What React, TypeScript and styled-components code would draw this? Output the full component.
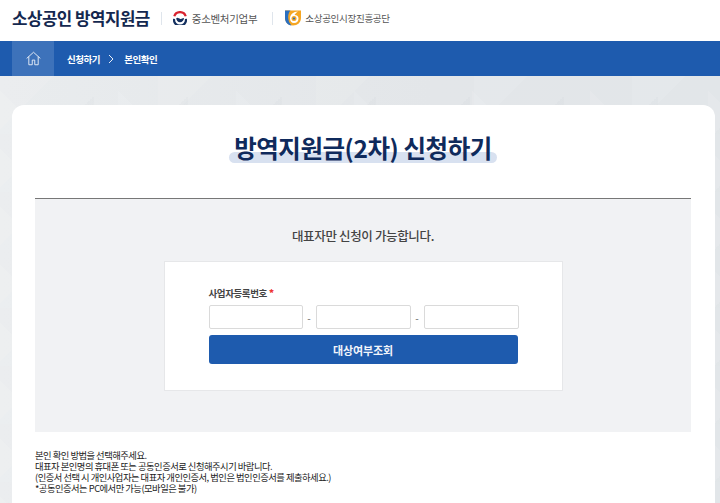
import React from "react";
import styled, { createGlobalStyle } from "styled-components";

const Global = createGlobalStyle`
  html, body { margin: 0; padding: 0; height: 503px; overflow: hidden; background: #e6e9ec; }
  * { box-sizing: border-box; }
  body { font-family: "Noto Sans CJK KR", "Noto Sans", sans-serif; }
`;
const Page = styled.div`width: 720px; height: 503px; overflow: hidden; display: flex; flex-direction: column;`;
const Header = styled.header`height: 41px; flex: none; background: #fff; display: flex; align-items: center; padding: 0 0 5px 12px;`;
const Brand = styled.h1`margin: 0; font-size: 16.8px; line-height: 24px; font-weight: 700; color: #14284f; letter-spacing: -0.5px; white-space: nowrap;`;
const Sep = styled.i<{ $m: string }>`width: 1px; height: 13px; background: #dfe5ec; margin: ${p => p.$m};`;
const Org = styled.span<{ $size: number }>`font-size: ${p => p.$size}px; color: #555; letter-spacing: -0.3px; white-space: nowrap; margin-left: ${p => (p.$size > 10 ? 5 : 3)}px;`;
const Nav = styled.nav`height: 35px; flex: none; background: #1e5bae; display: flex; align-items: center; padding-left: 12px; color: #fff;`;
const HomeBox = styled.div`width: 42px; height: 35px; background: #3d72ba; display: flex; align-items: center; justify-content: center;`;
const Crumb = styled.span`font-size: 9.5px; font-weight: 700; letter-spacing: -0.45px; white-space: nowrap; &:first-of-type { margin-left: 13px; }`;
const Chevron = styled.svg`margin: 0 10px 0 8px;`;
const Background = styled.main`
  flex: 1; padding: 29px 5px 0 12px;
  background-color: #e5e8eb;
  background-image:
    linear-gradient(45deg, rgba(255,255,255,.09) 25%, transparent 25%),
    linear-gradient(-45deg, rgba(120,130,140,.035) 25%, transparent 25%),
    linear-gradient(135deg, rgba(255,255,255,.07) 25%, transparent 25%),
    linear-gradient(90deg, #e9ecee 0%, #e3e6e9 60%, #e2e6e9 100%);
  background-size: 118px 58px, 94px 58px, 158px 58px, 100% 100%;
`;
const Card = styled.section`height: 427px; background: #fff; border-radius: 12px 12px 0 0; padding: 0 24px 0 23px; display: flex; flex-direction: column;`;
const TitleRow = styled.div`height: 93px; display: flex; justify-content: center; padding-top: 25px; flex: none;`;
const Title = styled.h2`
  position: relative; margin: 0; height: 36px; padding: 0 5px; font-size: 24.5px; line-height: 36px; font-weight: 700; color: #0f2a5c; letter-spacing: -0.45px; white-space: nowrap;
  &::before { content: ""; position: absolute; left: 0; right: 0; top: 22px; height: 11px; border-radius: 6px; background: #d8e1f0; }
  & > span { position: relative; }
`;
const Panel = styled.div`height: 234px; flex: none; background: #f1f2f4; border-top: 1px solid #777; display: flex; flex-direction: column; align-items: center; padding-top: 26px;`;
const Lead = styled.p`margin: 0; font-size: 12.5px; line-height: 22px; font-weight: 500; color: #444; letter-spacing: -0.35px;`;
const FormBox = styled.div`width: 399px; height: 130px; margin-top: 14px; background: #fff; border: 1px solid #e6e7e9; padding: 24px 0 0 44px;`;
const Label = styled.label`display: block; font-size: 9.5px; line-height: 14px; font-weight: 700; color: #444; letter-spacing: -0.4px; & b { color: #e33; margin-left: 2px; }`;
const Fields = styled.div`display: flex; align-items: center; margin-top: 5px;`;
const Field = styled.input`width: 94px; height: 24px; border: 1px solid #dadada; border-radius: 2px; background: #fff; &:not(:first-child) { width: 95px; }`;
const Dash = styled.span`width: 13px; text-align: center; font-size: 10px; color: #666;`;
const Submit = styled.button`display: block; width: 309px; height: 29px; margin-top: 6px; border: 0; border-radius: 3px; background: #1e5bae; color: #f1f4fa; font: 700 11px "Noto Sans CJK KR", sans-serif; letter-spacing: -0.1px;`;
const Notes = styled.div`margin-top: 18px; font-size: 9.3px; line-height: 11px; color: #222; letter-spacing: -0.5px; white-space: nowrap;`;

export default function App() {
  return (
    <Page>
      <Global />
      <Header>
        <Brand>소상공인 방역지원금</Brand>
        <Sep $m="0 11px 0 11px" />
        <svg width="14" height="14" viewBox="0 0 24 24" style={{ flex: "none" }}>
          <circle cx="12" cy="12" r="11.500" fill="#fff" />
          <path d="M1.800 13.500A10.300 10.300 0 1 0 22.200 13.500" fill="none" stroke="#14305f" strokeWidth="3.800" />
          <path d="M2.200 9A10.300 10.300 0 0 1 21.800 9" fill="none" stroke="#d8232f" strokeWidth="3.800" />
          <path d="M5.500 12.500C7.500 10 10 12.500 12.500 13.500S17 11 18.800 12.500c-.2 4-3 6.800-6.800 6.800s-6.300-3-6.500-6.800z" fill="#14305f" />
        </svg>
        <Org $size={10.5}>중소벤처기업부</Org>
        <Sep $m="0 11px 0 15px" />
        <svg width="18" height="16" viewBox="0 0 36 32" style={{ flex: "none" }}>
          <path d="M2 1h32v15c0 9-7 15-16 15S2 25 2 16z" fill="#f5a623" />
          <path d="M2 1h11C7 7 6 21 15 31 7 30 2 24 2 16z" fill="#2a6fc0" />
          <path d="M28 3c-9 0-16 6-16 14 0 5 3 9 8 9 6 0 9-4 9-9 0-4-3-7-8-7 2-3 4-5 7-7z" fill="#fff" />
          <circle cx="20" cy="17" r="5" fill="#f5a623" />
          <circle cx="20" cy="17" r="2.200" fill="#2a6fc0" />
        </svg>
        <Org $size={9.5}>소상공인시장진흥공단</Org>
      </Header>
      <Nav>
        <HomeBox>
          <svg width="15" height="15" viewBox="0 0 24 24" fill="none" stroke="#e8eef8" strokeWidth="1.500" strokeLinejoin="round" strokeLinecap="round">
            <path d="M1.500 11.500 12 2l10.500 9.500M4.500 9.500V22h5.500v-7.500h4V22h5.500V9.500" />
          </svg>
        </HomeBox>
        <Crumb>신청하기</Crumb>
        <Chevron width="6" height="10" viewBox="0 0 6 10" fill="none" stroke="#e8eef8" strokeWidth="1">
          <path d="m1 1 4 4-4 4" />
        </Chevron>
        <Crumb>본인확인</Crumb>
      </Nav>
      <Background>
        <Card>
          <TitleRow>
            <Title><span>방역지원금(2차) 신청하기</span></Title>
          </TitleRow>
          <Panel>
            <Lead>대표자만 신청이 가능합니다.</Lead>
            <FormBox>
              <Label>사업자등록번호<b>*</b></Label>
              <Fields>
                <Field aria-label="사업자등록번호 앞자리" />
                <Dash>-</Dash>
                <Field aria-label="사업자등록번호 가운데" />
                <Dash>-</Dash>
                <Field aria-label="사업자등록번호 뒷자리" />
              </Fields>
              <Submit>대상여부조회</Submit>
            </FormBox>
          </Panel>
          <Notes>
            본인 확인 방법을 선택해주세요.<br />
            대표자 본인명의 휴대폰 또는 공동인증서로 신청해주시기 바랍니다.<br />
            (인증서 선택 시 개인사업자는 대표자 개인인증서, 법인은 법인인증서를 제출하세요.)<br />
            *공동인증서는 PC에서만 가능(모바일은 불가)
          </Notes>
        </Card>
      </Background>
    </Page>
  );
}
